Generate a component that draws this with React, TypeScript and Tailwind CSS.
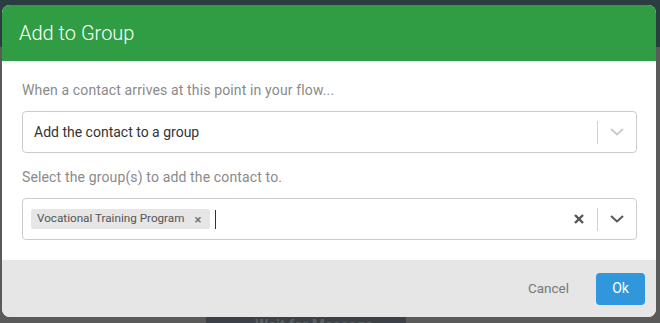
import { useState } from 'react';

const Chevron = ({ className }: { className: string }) => (
  <svg width="14" height="8" viewBox="0 0 14 8" className={className} fill="none">
    <path d="M1 1l6 5.5L13 1" stroke="currentColor" strokeWidth="2" />
  </svg>
);

const App = () => {
  const [groups, setGroups] = useState(['Vocational Training Program']);

  return (
    <div className="relative w-[660px] h-[323px] overflow-hidden bg-[#5a5a5a] font-['Roboto',sans-serif]">
      {/* page behind the overlay */}
      <div className="flex flex-col h-full">
        <div className="h-[47px] bg-[#2a3d41]" />
        <div className="flex-1" />
        <div className="flex h-[6px]">
          <div className="w-[206px]" />
          <div className="w-[200px] bg-[#3b4146] text-[#5a5f63] text-[15px] font-bold leading-[10px] pl-[49px] pt-[3px] overflow-hidden whitespace-nowrap">
            Wait for Message
          </div>
        </div>
      </div>

      {/* modal */}
      <div className="absolute left-[2px] top-[5px] w-[654px] h-[312px] rounded-[8px] overflow-hidden flex flex-col bg-white">
        <div className="h-[56px] bg-[#309c43] flex items-center pl-[17px]">
          <span className="text-white text-[20px] leading-none font-light">Add to Group</span>
        </div>

        <div className="flex-1 pl-[20px] pr-[19px] pt-[19px] flex flex-col">
          <div className="text-[14px] leading-[20px] text-[#8a8a8a] tracking-[0.14px]">When a contact arrives at this point in your flow...</div>
          <div className="mt-[11px] h-[42px] border border-[#cccccc] rounded-[4px] flex items-center">
            <div className="flex-1 pl-[11px] text-[14px] text-[#333]">Add the contact to a group</div>
            <div className="w-px h-[23px] bg-[#d0d0d0]" />
            <div className="w-[38px] flex justify-center">
              <Chevron className="text-[#cccccc]" />
            </div>
          </div>

          <div className="mt-[14px] text-[14px] leading-[20px] text-[#8a8a8a] tracking-[0.14px]">Select the group(s) to add the contact to.</div>
          <div className="mt-[11px] h-[42px] border border-[#cccccc] rounded-[4px] flex items-center">
            <div className="flex-1 flex items-center pl-[8px] gap-[5px]">
              {groups.map((g) => (
                <div key={g} className="h-[20px] bg-[#e6e6e6] rounded-[2px] flex items-center pl-[6px] pr-[9px] text-[11.7px] text-[#555]">
                  <span>{g}</span>
                  <button onClick={() => setGroups(groups.filter((x) => x !== g))} className="ml-[10px] text-[#777] text-[13px] font-bold leading-none">
                    ×
                  </button>
                </div>
              ))}
              <div className="w-px h-[19px] bg-[#333]" />
            </div>
            <div className="w-[32px] pr-[4px] flex justify-center">
              <svg width="10" height="10" viewBox="0 0 10 10">
                <path d="M1 1l8 8M9 1l-8 8" stroke="#555" strokeWidth="2.4" />
              </svg>
            </div>
            <div className="w-px h-[23px] bg-[#d0d0d0]" />
            <div className="w-[38px] flex justify-center">
              <Chevron className="text-[#555]" />
            </div>
          </div>
        </div>

        <div className="h-[57px] bg-[#e6e6e6] flex items-center justify-end pr-[11px]">
          <button className="text-[13.5px] text-[#777] mr-[27px]">Cancel</button>
          <button className="w-[49px] h-[32px] rounded-[4px] bg-[#3097dc] text-white text-[14px]">Ok</button>
        </div>
      </div>
    </div>
  );
};

export default App;
